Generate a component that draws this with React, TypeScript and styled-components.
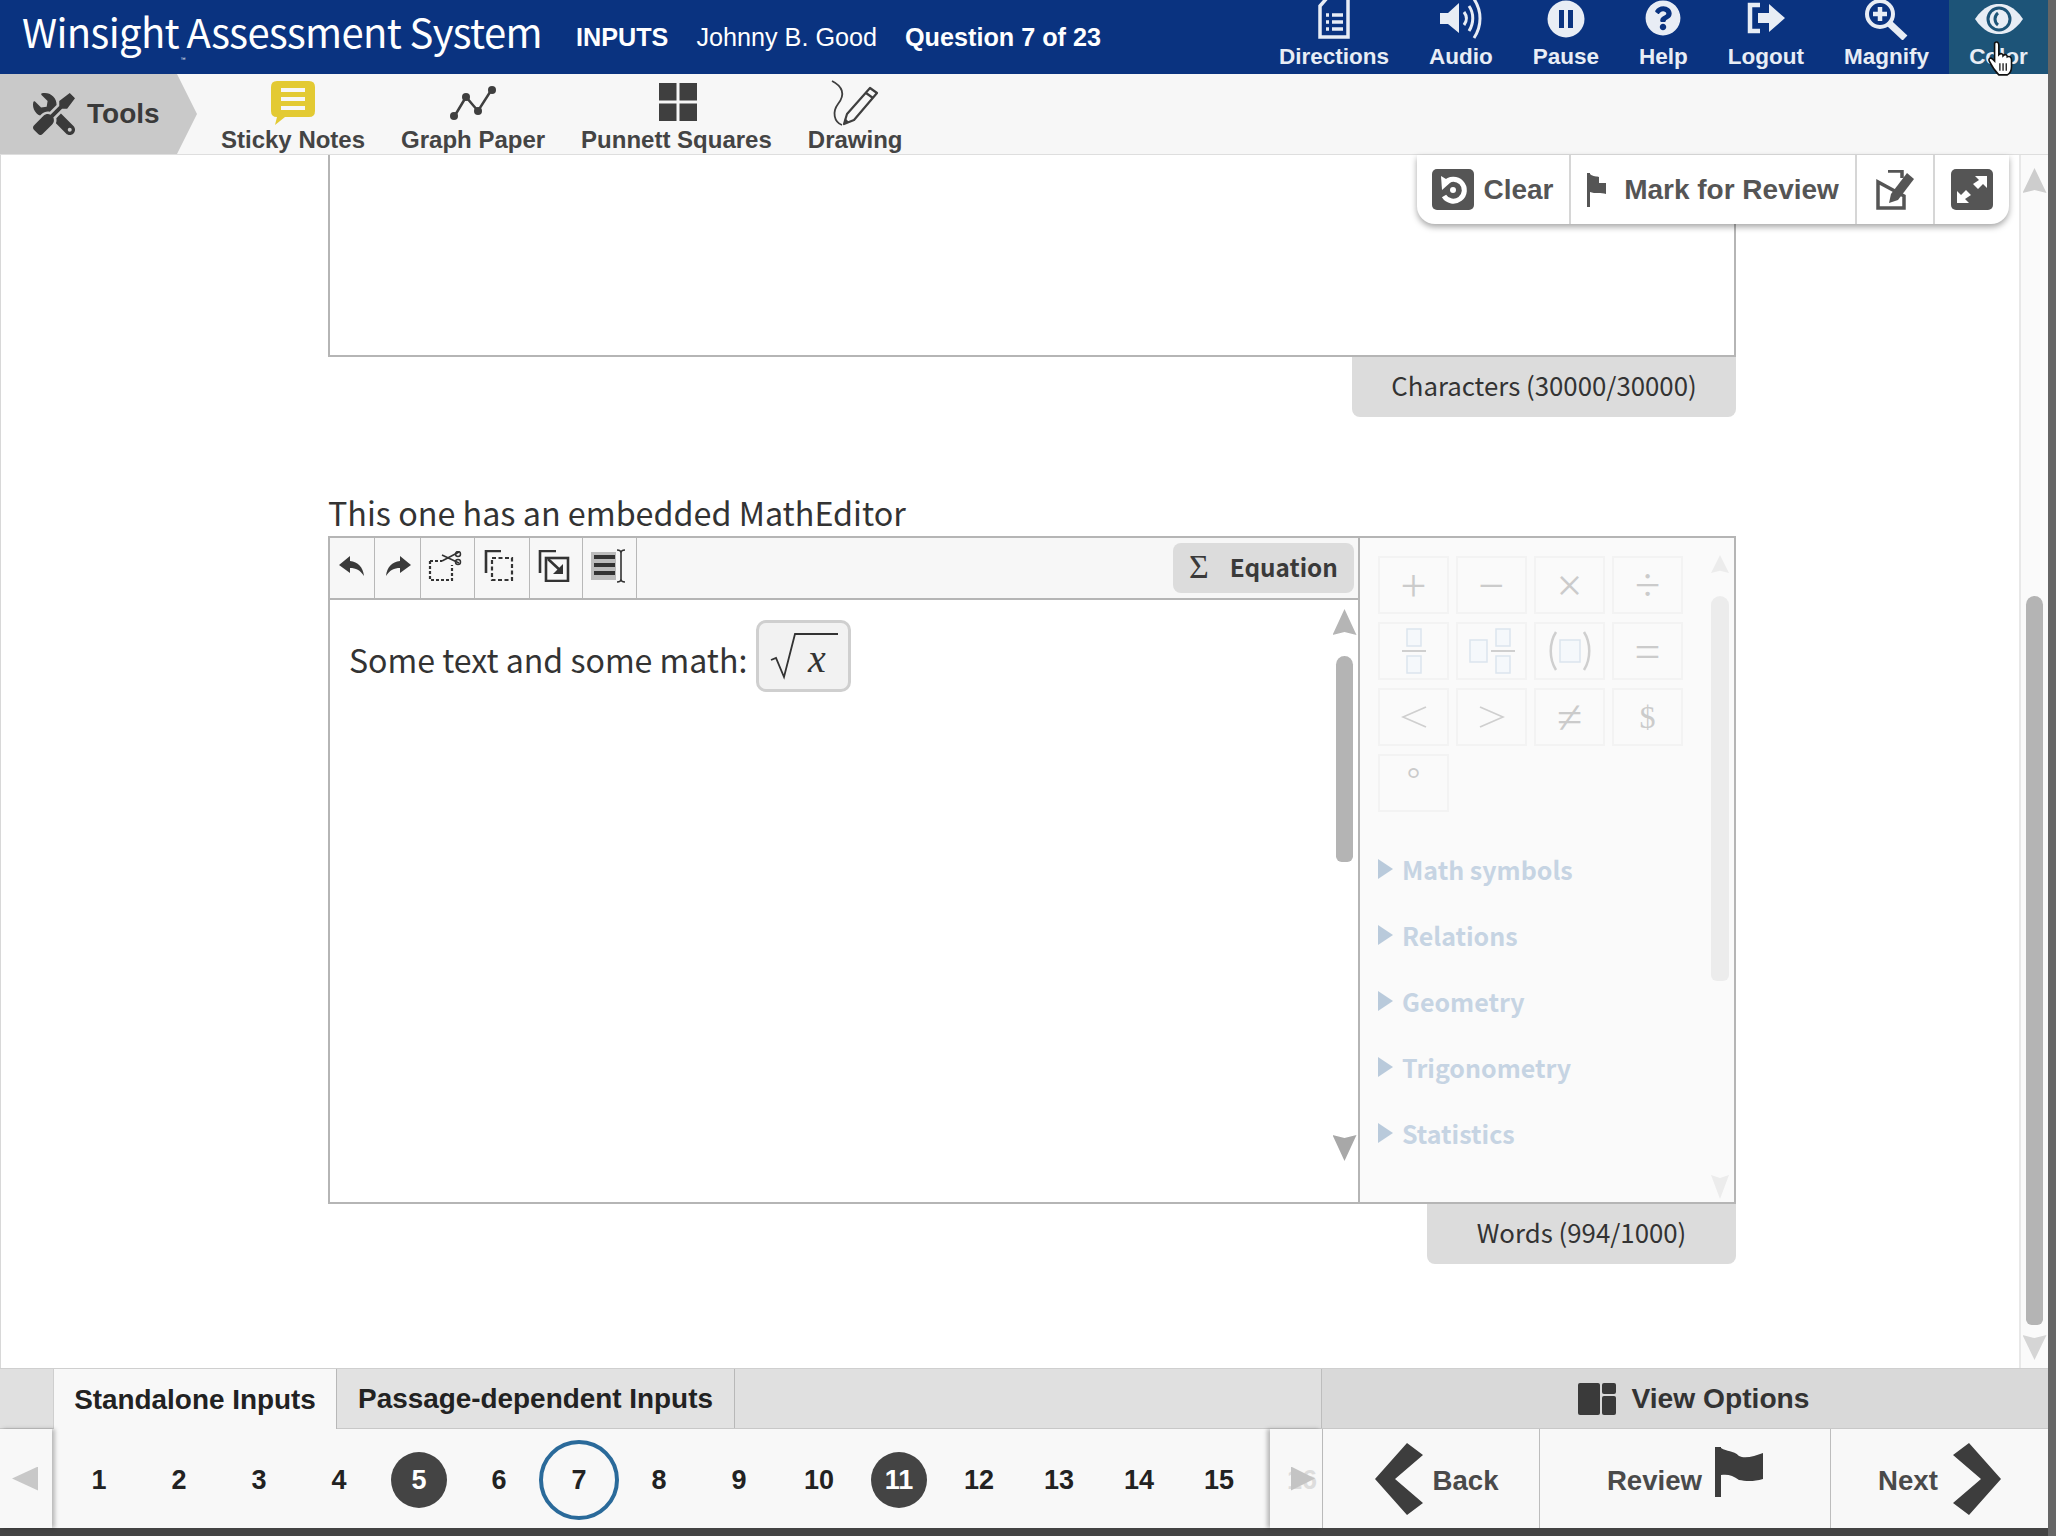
import React from "react";
import styled, {createGlobalStyle} from "styled-components";
import {FaTools, FaQuestionCircle} from "react-icons/fa";

const Global = createGlobalStyle`
  html, body {
    margin: 0;
    padding: 0;
    background: #666;
  }
  * {
    box-sizing: border-box;
  }
`;

const ARIAL = `"Liberation Sans", Arial, sans-serif`;
const SOURCE = `"Noto Sans CJK SC", "Noto Sans", sans-serif`;

const Page = styled.div`
  width: 2048px;
  height: 1536px;
  display: flex;
  flex-direction: column;
  background: #fff;
  overflow: hidden;
  font-family: ${ARIAL};
`;

/* header */
const Header = styled.header`
  height: 74px;
  flex: none;
  display: flex;
  align-items: center;
  background: #0a3380;
  color: #fff;
  position: relative;
`;

const Brand = styled.div`
  font-family: ${SOURCE};
  font-size: 40px;
  font-weight: 400;
  letter-spacing: -0.65px;
  margin: -8px 0 0 22px;
  width: 554px;
  white-space: nowrap;
`;

const TradeMark = styled.sup`
  font-size: 6px;
  vertical-align: -14px;
  margin: 0 2px;
`;

const Meta = styled.span<{ $bold?: boolean }>`
  font-size: 25.2px;
  font-weight: ${p => (p.$bold ? 700 : 400)};
  margin-right: 28px;
  white-space: nowrap;
`;

const HeaderNav = styled.nav`
  margin-left: auto;
  display: flex;
  height: 74px;
`;

const NavItem = styled.div<{ $active?: boolean; $width?: number }>`
  width: ${p => (p.$width ? `${p.$width}px` : "auto")};
  padding: 0 ${p => (p.$active ? 0 : 20)}px;
  display: flex;
  flex-direction: column;
  align-items: center;
  background: ${p => (p.$active ? "#1d5478" : "transparent")};
  color: #e8edf5;
`;

const NavIcon = styled.div`
  height: 44px;
  display: flex;
  align-items: flex-start;
  justify-content: center;
`;

const NavLabel = styled.span`
  font-size: 22.5px;
  font-weight: 700;
  line-height: 26px;
  white-space: nowrap;
`;

const HandCursor = styled.svg`
  position: absolute;
  left: 1988px;
  top: 41px;
`;

/* tool bar */
const ToolRow = styled.div`
  height: 81px;
  flex: none;
  display: flex;
  background: #f7f7f7;
  border-bottom: 1px solid #dedede;
  color: #444;
`;

const ToolsTab = styled.div`
  width: 197px;
  height: 80px;
  display: flex;
  align-items: center;
  gap: 12px;
  padding-left: 33px;
  background: #c9c9c9;
  clip-path: polygon(0 0, 177px 0, 197px 50%, 177px 100%, 0 100%);
  font-size: 28px;
  font-weight: 700;
  color: #3a3a3a;
`;

const ToolList = styled.div`
  display: flex;
  gap: 36px;
  margin-left: 24px;
`;

const Tool = styled.div`
  display: flex;
  flex-direction: column;
  align-items: center;
  height: 80px;
  font-size: 24px;
  font-weight: 700;
  white-space: nowrap;
`;

const ToolIcon = styled.div`
  height: 52px;
  padding-top: 9px;
  display: flex;
  align-items: flex-start;
`;

/* main */
const Main = styled.main`
  flex: 1;
  min-height: 0;
  display: flex;
  position: relative;
  border-left: 1px solid #d8d8d8;
`;

const Content = styled.div`
  flex: 1;
  padding-left: 327px;
  padding-right: 283px;
`;

const AnswerBox = styled.div`
  height: 202px;
  background: #fff;
  border: 2px solid #b5b5b5;
  border-top: 0;
`;

const CounterRow = styled.div`
  display: flex;
  justify-content: flex-end;
`;

const Counter = styled.div<{ $width: number }>`
  width: ${p => p.$width}px;
  height: 60px;
  display: flex;
  align-items: center;
  justify-content: center;
  padding-bottom: 6px;
  background: #dcdcdc;
  border-radius: 0 0 8px 8px;
  font-family: ${SOURCE};
  font-size: 25.8px;
  color: #333;
`;

const Label = styled.div`
  margin-top: 75px;
  height: 44px;
  font-family: ${SOURCE};
  font-size: 32.3px;
  line-height: 41px;
  color: #333;
  white-space: nowrap;
`;

const Editor = styled.div`
  height: 668px;
  display: grid;
  grid-template-columns: 1fr 376px;
  border: 2px solid #b5b5b5;
`;

const EditorLeft = styled.div`
  display: flex;
  flex-direction: column;
  min-width: 0;
`;

const EditorBar = styled.div`
  height: 62px;
  flex: none;
  display: flex;
  align-items: stretch;
  background: #f7f7f7;
  border-bottom: 2px solid #b5b5b5;
  padding-right: 4px;
`;

const EditorBtn = styled.div<{ $width: number; $nudge?: number }>`
  width: ${p => p.$width}px;
  display: flex;
  align-items: center;
  justify-content: center;
  padding: 0 ${p => p.$nudge || 0}px 4px 0;
  border-right: 1px solid #b8b8b8;
`;

const EquationBtn = styled.div`
  margin: 5px 0 5px auto;
  width: 181px;
  display: flex;
  align-items: center;
  gap: 21px;
  padding: 0 0 3px 16px;
  background: #dcdcdc;
  border-radius: 8px;
  font-family: ${SOURCE};
  font-size: 24.3px;
  font-weight: 700;
  color: #3a3a3a;
`;

const Sigma = styled.span`
  font-family: "Liberation Serif", serif;
  font-size: 34px;
  font-weight: 400;
`;

const EditorBody = styled.div`
  flex: 1;
  display: flex;
  min-height: 0;
`;

const EditorText = styled.div`
  flex: 1;
  display: flex;
  align-items: flex-start;
  gap: 9px;
  padding: 20px 0 0 19px;
  font-family: ${SOURCE};
  font-size: 32.1px;
  color: #333;
`;

const TextLine = styled.span`
  line-height: 72px;
  margin-top: 3px;
  white-space: nowrap;
`;

const MathBox = styled.div`
  width: 95px;
  height: 72px;
  display: flex;
  align-items: center;
  justify-content: center;
  background: #f2f2f2;
  border: 3px solid #cfcfcf;
  border-radius: 10px;
`;

const MathX = styled.text`
  font-family: "Liberation Serif", serif;
  font-style: italic;
  font-size: 40px;
  fill: #333;
`;

/* scrollbars */
const Gutter = styled.div<{ $width: number; $top: number; $bg?: string; $line?: string; $end?: number; $start?: number }>`
  width: ${p => p.$width}px;
  flex: none;
  display: flex;
  flex-direction: column;
  align-items: center;
  padding-top: ${p => p.$top}px;
  padding-left: ${p => p.$start || 0}px;
  margin-right: ${p => p.$end || 0}px;
  background: ${p => p.$bg || "transparent"};
  border-left: ${p => (p.$line ? `2px solid ${p.$line}` : "0")};
`;

const ScrollArrow = styled.div<{ $down?: boolean; $color: string; $w?: number; $h?: number; $bottom?: number }>`
  width: ${p => p.$w || 24}px;
  height: ${p => p.$h || 26}px;
  flex: none;
  background: ${p => p.$color};
  margin-top: ${p => (p.$down ? "auto" : "0")};
  margin-bottom: ${p => p.$bottom || 0}px;
  clip-path: ${p =>
    p.$down
      ? "polygon(0 0, 50% 12%, 100% 0, 50% 100%)"
      : "polygon(50% 0, 100% 100%, 50% 88%, 0 100%)"};
`;

const Thumb = styled.div<{ $w: number; $h: number; $gap: number; $color: string }>`
  width: ${p => p.$w}px;
  height: ${p => p.$h}px;
  margin-top: ${p => p.$gap}px;
  background: ${p => p.$color};
  border-radius: 9px 9px 6px 6px;
  flex: none;
`;

/* right hand math palette */
const Palette = styled.div`
  display: flex;
  background: #fafafa;
  border-left: 2px solid #b5b5b5;
  min-height: 0;
`;

const PaletteMain = styled.div`
  flex: 1;
  padding: 18px 0 0 18px;
`;

const KeyGrid = styled.div`
  display: grid;
  grid-template-columns: repeat(4, 71px);
  grid-auto-rows: 58px;
  gap: 8px 7px;
`;

const Key = styled.div<{ $size?: number }>`
  display: flex;
  align-items: center;
  justify-content: center;
  border: 2px solid #f3f3f3;
  font-family: "Liberation Serif", serif;
  font-size: ${p => p.$size || 46}px;
  font-weight: 400;
  color: #cbcbcb;
`;

const Degree = styled(Key)`
  align-items: flex-start;
  padding-top: 4px;
`;

const Accordion = styled.div`
  margin-top: 24px;
`;

const AccordionRow = styled.div`
  height: 66px;
  display: flex;
  align-items: center;
  gap: 9px;
  font-family: ${SOURCE};
  font-size: 25px;
  font-weight: 700;
  color: #c6d4e3;
  white-space: nowrap;
`;

const Caret = styled.span`
  width: 15px;
  height: 20px;
  background: #b9cadb;
  clip-path: polygon(0 0, 100% 50%, 0 100%);
`;

/* floating question toolbar */
const FloatBar = styled.div`
  position: absolute;
  right: 39px;
  top: 0;
  height: 69px;
  display: flex;
  background: #fff;
  border-radius: 0 0 18px 18px;
  box-shadow: 0 3px 6px rgba(0, 0, 0, 0.35);
  color: #555;
  font-size: 28px;
  font-weight: 700;
`;

const FloatItem = styled.div<{ $width: number; $gap?: number; $last?: boolean }>`
  width: ${p => p.$width}px;
  display: flex;
  align-items: center;
  justify-content: center;
  gap: ${p => p.$gap || 0}px;
  border-right: ${p => (p.$last ? "0" : "2px solid #d6d6d6")};
  white-space: nowrap;
`;

/* footer */
const Footer = styled.footer`
  flex: none;
  border-top: 1px solid #cfcfcf;
  border-bottom: 8px solid #444;
`;

const TabRow = styled.div`
  height: 60px;
  display: flex;
  background: #e0e0e0;
  border-bottom: 1px solid #c8c8c8;
`;

const Tab = styled.div<{ $active?: boolean; $first?: boolean; $width: number }>`
  width: ${p => p.$width}px;
  height: ${p => (p.$active ? 60 : 59)}px;
  margin-left: ${p => (p.$first ? 53 : 0)}px;
  display: flex;
  align-items: center;
  justify-content: center;
  padding-top: 1px;
  background: ${p => (p.$active ? "#f8f8f8" : "#e2e2e2")};
  border-left: ${p => (p.$first ? "1px solid #cfcfcf" : "0")};
  border-right: 1px solid #b8b8b8;
  font-size: 27.9px;
  font-weight: 700;
  color: #222;
  white-space: nowrap;
`;

const ViewOptions = styled.div`
  margin-left: auto;
  width: 727px;
  height: 59px;
  display: flex;
  align-items: center;
  justify-content: center;
  gap: 15px;
  background: #d9d9d9;
  border-left: 1px solid #bdbdbd;
  font-size: 28.2px;
  font-weight: 700;
  color: #333;
  padding-left: 18px;
`;

const NavRow = styled.div`
  height: 99px;
  display: flex;
  background: #f8f8f8;
`;

const PagerArrow = styled.div<{ $right?: boolean }>`
  width: 52px;
  flex: none;
  position: relative;
  display: flex;
  align-items: center;
  justify-content: center;
  z-index: 1;
  box-shadow: ${p => (p.$right ? "-3px 0 4px rgba(0,0,0,0.25)" : "3px 0 4px rgba(0,0,0,0.25)")};
`;

const LeftTriangle = styled.span`
  width: 26px;
  height: 24px;
  background: #c8c8c8;
  clip-path: polygon(0 50%, 100% 0, 100% 100%);
  margin-left: -2px;
`;

const RightTriangle = styled.span`
  width: 24px;
  height: 24px;
  position: relative;
  background: #c4c4c4;
  clip-path: polygon(0 0, 100% 50%, 0 100%);
  margin-left: 14px;
`;

const FadedNumber = styled.span`
  position: absolute;
  left: 17px;
  top: 36px;
  font-size: 27px;
  font-weight: 700;
  color: #ddd;
`;

const Pager = styled.div`
  width: 1218px;
  flex: none;
  display: flex;
  align-items: center;
  padding: 2px 0 0 7px;
`;

const PageCell = styled.div`
  width: 80px;
  height: 97px;
  display: flex;
  align-items: center;
  justify-content: center;
`;

const PageNum = styled.div<{ $done?: boolean; $current?: boolean }>`
  width: ${p => (p.$current ? 80 : 56)}px;
  height: ${p => (p.$current ? 80 : 56)}px;
  flex: none;
  display: flex;
  align-items: center;
  justify-content: center;
  padding-top: 1px;
  border-radius: 50%;
  background: ${p => (p.$done ? "#444" : "transparent")};
  border: ${p => (p.$current ? "4px solid #2a6a9a" : "0")};
  color: ${p => (p.$done ? "#fff" : "#222")};
  font-size: 27px;
  font-weight: 700;
`;

const NavBtn = styled.div<{ $width: number; $gap: number; $lead?: number }>`
  width: ${p => p.$width}px;
  flex: none;
  display: flex;
  align-items: center;
  justify-content: center;
  gap: ${p => p.$gap}px;
  padding-left: ${p => p.$lead || 0}px;
  border-left: 1px solid #bdbdbd;
  font-size: 27.6px;
  font-weight: 700;
  color: #4a4a4a;
`;

const NavText = styled.span`
  margin-top: 4px;
`;

const FlagUp = styled.svg`
  margin-top: -14px;
`;

const pages = [1, 2, 3, 4, 5, 6, 7, 8, 9, 10, 11, 12, 13, 14, 15];
const categories = ["Math symbols", "Relations", "Geometry", "Trigonometry", "Statistics"];

const Chevron = ({left}: { left?: boolean }) => (
    <svg width="48" height="72" viewBox="0 0 48 72">
        <path d={left ? "M32 0 L48 12 L20 36 L48 60 L32 72 L0 36 Z" : "M16 0 L0 12 L28 36 L0 60 L16 72 L48 36 Z"}
              fill="#3d3d3d"/>
    </svg>
);

const Slot = ({x, y, w, h}: { x: number; y: number; w: number; h: number }) => (
    <rect x={x} y={y} width={w} height={h} fill="#f5f8fb" stroke="#dbe5ee" strokeWidth="1.5"/>
);

function App() {
    return (
        <Page>
            <Global/>
            <Header>
                <Brand>Winsight<TradeMark>™</TradeMark>Assessment System</Brand>
                <Meta $bold>INPUTS</Meta>
                <Meta>Johnny B. Good</Meta>
                <Meta $bold>Question 7 of 23</Meta>
                <HeaderNav>
                    <NavItem>
                        <NavIcon>
                            <svg width="34" height="39" viewBox="0 0 34 39" fill="none">
                                <path d="M10 -2 H31 V37 H3 V6 Z" stroke="#e8edf5" strokeWidth="3.5"/>
                                <path d="M9 15 H12 M15 15 H26 M9 22 H12 M15 22 H26 M9 29 H12 M15 29 H26"
                                      stroke="#e8edf5" strokeWidth="3.5"/>
                            </svg>
                        </NavIcon>
                        <NavLabel>Directions</NavLabel>
                    </NavItem>
                    <NavItem>
                        <NavIcon>
                            <svg width="44" height="40" viewBox="0 0 44 40" fill="none">
                                <path d="M1 13 H9 L20 3 V33 L9 24 H1 Z" fill="#e8edf5"/>
                                <path d="M25 12 C28 16 28 21 25 25" stroke="#e8edf5" strokeWidth="3"/>
                                <path d="M30 6 C35 13 35 23 30 31" stroke="#e8edf5" strokeWidth="3"/>
                                <path d="M35 -1 C43 11 43 26 35 38" stroke="#e8edf5" strokeWidth="3"/>
                            </svg>
                        </NavIcon>
                        <NavLabel>Audio</NavLabel>
                    </NavItem>
                    <NavItem>
                        <NavIcon>
                            <svg width="38" height="38" viewBox="0 0 38 38">
                                <circle cx="19" cy="19" r="18.5" fill="#e8edf5"/>
                                <rect x="12" y="10" width="5" height="18" fill="#0a3380"/>
                                <rect x="21" y="10" width="5" height="18" fill="#0a3380"/>
                            </svg>
                        </NavIcon>
                        <NavLabel>Pause</NavLabel>
                    </NavItem>
                    <NavItem>
                        <NavIcon>
                            <FaQuestionCircle size={36}/>
                        </NavIcon>
                        <NavLabel>Help</NavLabel>
                    </NavItem>
                    <NavItem>
                        <NavIcon>
                            <svg width="40" height="36" viewBox="0 0 40 36" fill="none">
                                <path d="M14 5 H4 V31 H14" stroke="#e8edf5" strokeWidth="4.5"/>
                                <path d="M12 13 H23 V4 L39 18 L23 32 V23 H12 Z" fill="#e8edf5"/>
                            </svg>
                        </NavIcon>
                        <NavLabel>Logout</NavLabel>
                    </NavItem>
                    <NavItem>
                        <NavIcon>
                            <svg width="44" height="40" viewBox="0 0 44 40" fill="none">
                                <circle cx="16" cy="14" r="13" stroke="#e8edf5" strokeWidth="4"/>
                                <path d="M16 7 V21 M9 14 H23" stroke="#e8edf5" strokeWidth="4.5"/>
                                <path d="M26 24 L41 38" stroke="#e8edf5" strokeWidth="7"/>
                            </svg>
                        </NavIcon>
                        <NavLabel>Magnify</NavLabel>
                    </NavItem>
                    <NavItem $active $width={99}>
                        <NavIcon>
                            <svg width="50" height="36" viewBox="0 0 50 36" fill="none" style={{marginTop: 1}}>
                                <path d="M1 18 C10 5 18 3 25 3 C32 3 40 5 49 18 C40 31 32 33 25 33 C18 33 10 31 1 18 Z"
                                      fill="#e8edf5"/>
                                <circle cx="25" cy="18" r="11" stroke="#1d5478" strokeWidth="3"/>
                                <path d="M24 12 C20 15 20 21 24 24" stroke="#1d5478" strokeWidth="3"/>
                            </svg>
                        </NavIcon>
                        <NavLabel>Color</NavLabel>
                    </NavItem>
                </HeaderNav>
                <HandCursor width="28" height="36" viewBox="0 0 26 34">
                    <path
                        d="M6 2 C8 0 10 1 10 4 V13 C12 11 14 12 14 14 C16 12 18 13 18 15 C20 14 22 15 22 18 V24 C22 28 20 31 18 32 H10 C8 30 3 23 1 19 C0 17 2 15 4 17 L6 19 Z"
                        fill="#fff" stroke="#111" strokeWidth="1.5"/>
                    <path d="M11 21 V28 M14 21 V28 M17 21 V28" stroke="#111" strokeWidth="1.2"/>
                </HandCursor>
            </Header>

            <ToolRow>
                <ToolsTab>
                    <FaTools size={42} style={{transform: "scaleX(-1)"}}/>
                    Tools
                </ToolsTab>
                <ToolList>
                    <Tool>
                        <ToolIcon>
                            <svg width="44" height="44" viewBox="0 0 44 44" style={{marginTop: -2}}>
                                <path
                                    d="M6 0 H38 Q44 0 44 6 V30 Q44 36 38 36 H14 L4 44 L6 36 Q0 36 0 30 V6 Q0 0 6 0 Z"
                                    fill="#e3ca33"/>
                                <path d="M10 9 H34 M10 18 H34 M10 27 H34" stroke="#f7f7f7" strokeWidth="4"/>
                            </svg>
                        </ToolIcon>
                        Sticky Notes
                    </Tool>
                    <Tool>
                        <ToolIcon>
                            <svg width="46" height="36" viewBox="0 0 46 36" fill="none" style={{marginTop: 2}}>
                                <path d="M4 32 L16 12 L28 26 L42 4" stroke="#3f3f3f" strokeWidth="2.5"/>
                                <circle cx="4" cy="31" r="4" fill="#3f3f3f"/>
                                <circle cx="16" cy="12" r="4" fill="#3f3f3f"/>
                                <circle cx="28" cy="26" r="4" fill="#3f3f3f"/>
                                <circle cx="42" cy="5" r="4" fill="#3f3f3f"/>
                            </svg>
                        </ToolIcon>
                        Graph Paper
                    </Tool>
                    <Tool>
                        <ToolIcon>
                            <svg width="38" height="38" viewBox="0 0 38 38" fill="#3f3f3f" style={{marginLeft: 3}}>
                                <rect x="0" y="0" width="17.5" height="17.5"/>
                                <rect x="20.5" y="0" width="17.5" height="17.5"/>
                                <rect x="0" y="20.5" width="17.5" height="17.5"/>
                                <rect x="20.5" y="20.5" width="17.5" height="17.5"/>
                            </svg>
                        </ToolIcon>
                        Punnett Squares
                    </Tool>
                    <Tool>
                        <ToolIcon>
                            <svg width="50" height="46" viewBox="0 0 50 46" fill="none" style={{marginTop: -3}}>
                                <path d="M2 1 C12 6 16 14 8 24 C2 32 4 42 12 45" stroke="#3f3f3f" strokeWidth="1.8"/>
                                <path d="M40 8 L47 13 L24 40 L14 44 L17 34 Z" stroke="#3f3f3f" strokeWidth="2.2"
                                      strokeLinejoin="round"/>
                                <path d="M36 13 L43 18" stroke="#3f3f3f" strokeWidth="2.2"/>
                                <path d="M14 44 L15 38 L19 42 Z" fill="#3f3f3f"/>
                            </svg>
                        </ToolIcon>
                        Drawing
                    </Tool>
                </ToolList>
            </ToolRow>

            <Main>
                <Content>
                    <AnswerBox/>
                    <CounterRow>
                        <Counter $width={384}>Characters (30000/30000)</Counter>
                    </CounterRow>
                    <Label>This one has an embedded MathEditor</Label>
                    <Editor>
                        <EditorLeft>
                            <EditorBar>
                                <EditorBtn $width={45}>
                                    <svg width="26" height="22" viewBox="0 0 26 22">
                                        <path d="M11 1 L0 10 L11 18 V13 C17 13 21 15 25 21 C24 12 19 7 11 6 Z"
                                              fill="#3a3a3a"/>
                                    </svg>
                                </EditorBtn>
                                <EditorBtn $width={46}>
                                    <svg width="26" height="22" viewBox="0 0 26 22">
                                        <path d="M15 1 L26 10 L15 18 V13 C9 13 5 15 1 21 C2 12 7 7 15 6 Z"
                                              fill="#3a3a3a"/>
                                    </svg>
                                </EditorBtn>
                                <EditorBtn $width={54} $nudge={5}>
                                    <svg width="34" height="30" viewBox="0 0 34 30" fill="none">
                                        <path d="M2 10 H14 M2 10 V29 H24 V14" stroke="#333" strokeWidth="2.2"
                                              strokeDasharray="3 2"/>
                                        <path d="M14 10 L31 1 M14 4 L31 12" stroke="#333" strokeWidth="1.6"/>
                                        <circle cx="30" cy="3" r="2.5" stroke="#333" strokeWidth="1.5"/>
                                        <circle cx="30" cy="11" r="2.5" stroke="#333" strokeWidth="1.5"/>
                                    </svg>
                                </EditorBtn>
                                <EditorBtn $width={55} $nudge={6}>
                                    <svg width="30" height="32" viewBox="0 0 30 32" fill="none">
                                        <path d="M17 1 H2 V23" stroke="#333" strokeWidth="2.6"/>
                                        <rect x="8" y="8" width="20" height="22" stroke="#333" strokeWidth="2.2"
                                              strokeDasharray="4 2.5"/>
                                    </svg>
                                </EditorBtn>
                                <EditorBtn $width={53} $nudge={4}>
                                    <svg width="32" height="32" viewBox="0 0 32 32" fill="none">
                                        <path d="M18 1 H2 V23" stroke="#333" strokeWidth="2.6"/>
                                        <rect x="8" y="8" width="22" height="23" stroke="#333" strokeWidth="2.6"/>
                                        <path d="M10 9 L24 22" stroke="#333" strokeWidth="2.6"/>
                                        <path d="M25 14 V24 H15 Z" fill="#333"/>
                                    </svg>
                                </EditorBtn>
                                <EditorBtn $width={54}>
                                    <svg width="38" height="34" viewBox="0 0 38 34" fill="none">
                                        <rect x="0" y="3" width="25" height="28" fill="#bcbcbc"/>
                                        <path d="M3 8 H24 M3 16 H24 M3 24 H24" stroke="#333" strokeWidth="4"/>
                                        <path d="M26 1 C29 1 30 2 30 4 V30 C30 32 29 33 26 33 M34 1 C31 1 30 2 30 4 M30 30 C30 32 31 33 34 33"
                                              stroke="#333" strokeWidth="1.6"/>
                                    </svg>
                                </EditorBtn>
                                <EquationBtn>
                                    <Sigma>Σ</Sigma>
                                    Equation
                                </EquationBtn>
                            </EditorBar>
                            <EditorBody>
                                <EditorText>
                                    <TextLine>Some text and some math:</TextLine>
                                    <MathBox>
                                        <svg width="68" height="62" viewBox="0 0 68 62" fill="none">
                                            <path d="M1 35 L6 33 L14 52 L25 9 H68" stroke="#333" strokeWidth="1.8"/>
                                            <MathX x="38" y="47">x</MathX>
                                        </svg>
                                    </MathBox>
                                </EditorText>
                                <Gutter $width={30} $top={9} $start={3}>
                                    <ScrollArrow $color="#b5b5b5"/>
                                    <Thumb $w={17} $h={206} $gap={21} $color="#b4b4b4"/>
                                    <ScrollArrow $down $color="#a8a8a8" $bottom={41}/>
                                </Gutter>
                            </EditorBody>
                        </EditorLeft>
                        <Palette>
                            <PaletteMain>
                                <KeyGrid>
                                    <Key>+</Key>
                                    <Key>−</Key>
                                    <Key>×</Key>
                                    <Key>÷</Key>
                                    <Key>
                                        <svg width="24" height="46" viewBox="0 0 24 46">
                                            <Slot x={5} y={1} w={14} h={17}/>
                                            <path d="M0 23 H24" stroke="#cfcfcf" strokeWidth="2"/>
                                            <Slot x={5} y={28} w={14} h={17}/>
                                        </svg>
                                    </Key>
                                    <Key>
                                        <svg width="46" height="46" viewBox="0 0 46 46">
                                            <Slot x={1} y={12} w={17} h={22}/>
                                            <Slot x={27} y={1} w={14} h={17}/>
                                            <path d="M22 23 H46" stroke="#cfcfcf" strokeWidth="2"/>
                                            <Slot x={27} y={28} w={14} h={17}/>
                                        </svg>
                                    </Key>
                                    <Key>
                                        <svg width="44" height="40" viewBox="0 0 44 40" fill="none">
                                            <path d="M8 1 C1 12 1 28 8 39 M36 1 C43 12 43 28 36 39" stroke="#cfcfcf"
                                                  strokeWidth="2.5"/>
                                            <Slot x={12} y={9} w={20} h={22}/>
                                        </svg>
                                    </Key>
                                    <Key>=</Key>
                                    <Key>
                                        <svg width="26" height="22" viewBox="0 0 26 22" fill="none">
                                            <path d="M25 1 L2 11 L25 21" stroke="#cfcfcf" strokeWidth="1.8"/>
                                        </svg>
                                    </Key>
                                    <Key>
                                        <svg width="26" height="22" viewBox="0 0 26 22" fill="none">
                                            <path d="M1 1 L24 11 L1 21" stroke="#cfcfcf" strokeWidth="1.8"/>
                                        </svg>
                                    </Key>
                                    <Key>≠</Key>
                                    <Key $size={32}>$</Key>
                                    <Degree $size={34}>°</Degree>
                                </KeyGrid>
                                <Accordion>
                                    {categories.map(name => (
                                        <AccordionRow key={name}>
                                            <Caret/>
                                            {name}
                                        </AccordionRow>
                                    ))}
                                </Accordion>
                            </PaletteMain>
                            <Gutter $width={18} $top={17} $end={5}>
                                <ScrollArrow $color="#ececec" $w={18} $h={18}/>
                                <Thumb $w={18} $h={385} $gap={23} $color="#ececec"/>
                                <ScrollArrow $down $color="#ececec" $w={18} $h={24} $bottom={3}/>
                            </Gutter>
                        </Palette>
                    </Editor>
                    <CounterRow>
                        <Counter $width={309}>Words (994/1000)</Counter>
                    </CounterRow>
                </Content>
                <Gutter $width={29} $top={13} $bg="#fafafa" $line="#e8e8e8">
                    <ScrollArrow $color="#cdcdcd" $h={25}/>
                    <Thumb $w={17} $h={729} $gap={403} $color="#b4b4b4"/>
                    <ScrollArrow $down $color="#d5d5d5" $h={25} $bottom={8}/>
                </Gutter>
                <FloatBar>
                    <FloatItem $width={154} $gap={9}>
                        <svg width="42" height="41" viewBox="0 0 42 41">
                            <rect width="42" height="41" rx="5" fill="#555"/>
                            <path d="M13 14 A11 11 0 1 1 12 27" fill="none" stroke="#fff" strokeWidth="5"/>
                            <path d="M9 7 L19 13 L10 21 Z" fill="#fff"/>
                            <circle cx="21" cy="21" r="3" fill="#fff"/>
                        </svg>
                        Clear
                    </FloatItem>
                    <FloatItem $width={286} $gap={17}>
                        <svg width="20" height="34" viewBox="0 0 20 34">
                            <path d="M0 0 H3 V34 H0 Z M3 1 C6 4 10 3 12 4 V10 H19 V21 C14 19 8 21 3 19 Z" fill="#555"/>
                        </svg>
                        Mark for Review
                    </FloatItem>
                    <FloatItem $width={78}>
                        <svg width="38" height="40" viewBox="0 0 38 40" fill="none">
                            <path d="M12 1 H26 V8 M28 26 V38 H2 V12 Z" stroke="#555" strokeWidth="3.5"/>
                            <path d="M31 3 L38 9 L22 30 L13 33 L15 24 Z" fill="#555"/>
                        </svg>
                    </FloatItem>
                    <FloatItem $width={74} $last>
                        <svg width="42" height="41" viewBox="0 0 42 41">
                            <rect width="42" height="41" rx="5" fill="#555"/>
                            <path d="M24 7 H36 V19 L32 15 L27 20 L22 15 L28 11 Z" fill="#fff"/>
                            <path d="M6 22 L10 26 L15 21 L20 26 L14 30 L18 34 H6 Z" fill="#fff"/>
                        </svg>
                    </FloatItem>
                </FloatBar>
            </Main>

            <Footer>
                <TabRow>
                    <Tab $first $active $width={284}>Standalone Inputs</Tab>
                    <Tab $width={398}>Passage-dependent Inputs</Tab>
                    <ViewOptions>
                        <svg width="38" height="32" viewBox="0 0 38 32" fill="#3a3a3a">
                            <rect x="0" y="0" width="22" height="32" rx="2"/>
                            <rect x="24" y="0" width="14" height="11" rx="2"/>
                            <rect x="24" y="13" width="14" height="19" rx="2"/>
                        </svg>
                        View Options
                    </ViewOptions>
                </TabRow>
                <NavRow>
                    <PagerArrow><LeftTriangle/></PagerArrow>
                    <Pager>
                        {pages.map(n => (
                            <PageCell key={n}>
                                <PageNum $done={n === 5 || n === 11} $current={n === 7}>{n}</PageNum>
                            </PageCell>
                        ))}
                    </Pager>
                    <PagerArrow $right>
                        <FadedNumber>16</FadedNumber>
                        <RightTriangle/>
                    </PagerArrow>
                    <NavBtn $width={217} $gap={10} $lead={11}>
                        <Chevron left/>
                        <NavText>Back</NavText>
                    </NavBtn>
                    <NavBtn $width={291} $gap={13}>
                        <NavText>Review</NavText>
                        <FlagUp width="48" height="50" viewBox="0 0 48 50">
                            <path d="M0 0 H6 V50 H0 Z M6 1 C12 5 18 3 24 9 C30 12 40 9 48 6 V32 C38 35 30 34 24 33 C18 28 12 27 6 28 Z"
                                  fill="#3d3d3d"/>
                        </FlagUp>
                    </NavBtn>
                    <NavBtn $width={218} $gap={15}>
                        <NavText>Next</NavText>
                        <Chevron/>
                    </NavBtn>
                </NavRow>
            </Footer>
        </Page>
    );
}

export default App;
